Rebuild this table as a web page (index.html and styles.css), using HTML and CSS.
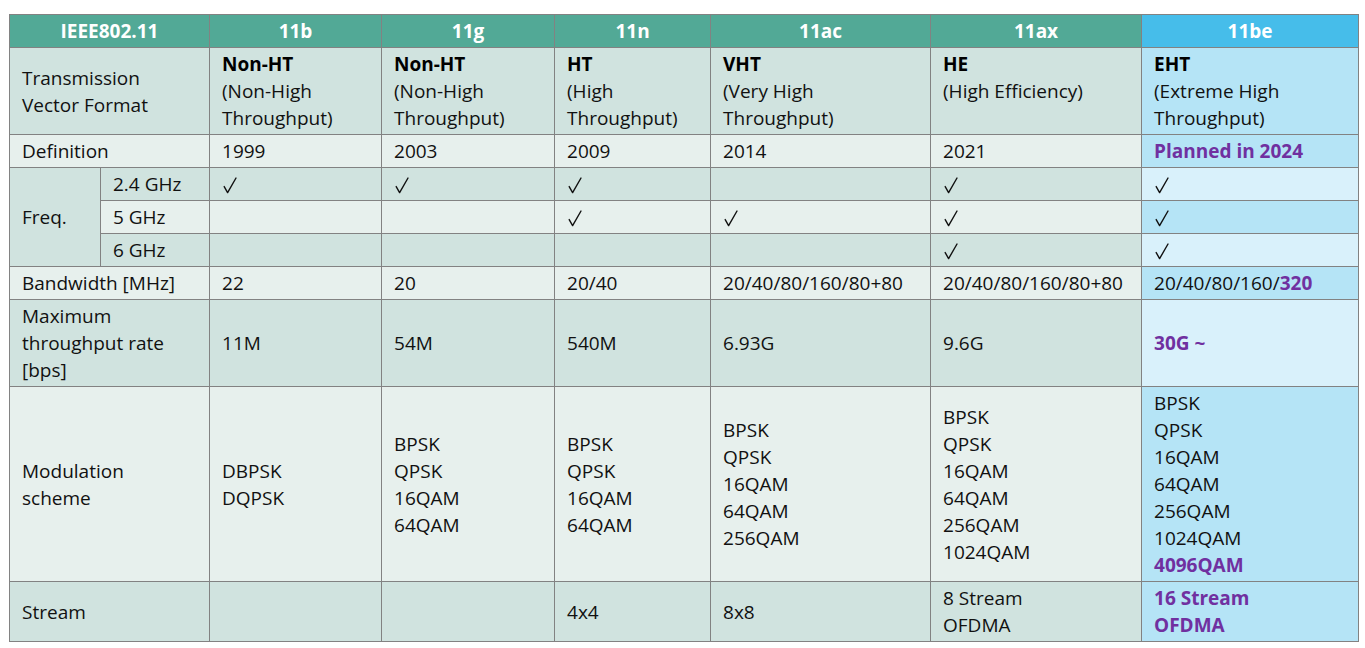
FILE: index.html
```html
<!DOCTYPE html>
<html lang="en">
<head>
<meta charset="utf-8">
<title>IEEE802.11 comparison</title>
<link rel="stylesheet" href="styles.css">
</head>
<body>
<svg class="defs" width="0" height="0" aria-hidden="true">
  <symbol id="ck" viewBox="0 0 14 17">
    <path d="M1.2 9.6 L4.6 15.6 L13 1" fill="none" stroke="#111" stroke-width="1.4" stroke-linecap="round" stroke-linejoin="round"/>
  </symbol>
</svg>
<table class="spec">
  <colgroup>
    <col class="c-a"><col class="c-b"><col class="c-11b"><col class="c-11g"><col class="c-11n"><col class="c-11ac"><col class="c-11ax"><col class="c-11be">
  </colgroup>
  <thead>
    <tr>
      <th colspan="2">IEEE802.11</th>
      <th>11b</th><th>11g</th><th>11n</th><th>11ac</th><th>11ax</th><th class="be">11be</th>
    </tr>
  </thead>
  <tbody>
    <tr class="dark">
      <td colspan="2">Transmission<br>Vector Format</td>
      <td><b>Non-HT</b><br>(Non-High<br>Throughput)</td>
      <td><b>Non-HT</b><br>(Non-High<br>Throughput)</td>
      <td><b>HT</b><br>(High<br>Throughput)</td>
      <td><b>VHT</b><br>(Very High<br>Throughput)</td>
      <td class="top"><b>HE</b><br>(High Efficiency)</td>
      <td class="be-d"><b>EHT</b><br>(Extreme High<br>Throughput)</td>
    </tr>
    <tr class="light">
      <td colspan="2">Definition</td>
      <td>1999</td><td>2003</td><td>2009</td><td>2014</td><td>2021</td>
      <td class="be-d"><b class="hl">Planned in 2024</b></td>
    </tr>
    <tr class="dark">
      <td rowspan="3" class="freq">Freq.</td>
      <td>2.4 GHz</td>
      <td><svg class="ck"><use href="#ck"/></svg></td>
      <td><svg class="ck"><use href="#ck"/></svg></td>
      <td><svg class="ck"><use href="#ck"/></svg></td>
      <td></td>
      <td><svg class="ck"><use href="#ck"/></svg></td>
      <td class="be-l"><svg class="ck"><use href="#ck"/></svg></td>
    </tr>
    <tr class="light">
      <td>5 GHz</td>
      <td></td><td></td>
      <td><svg class="ck"><use href="#ck"/></svg></td>
      <td><svg class="ck"><use href="#ck"/></svg></td>
      <td><svg class="ck"><use href="#ck"/></svg></td>
      <td class="be-d"><svg class="ck"><use href="#ck"/></svg></td>
    </tr>
    <tr class="dark">
      <td>6 GHz</td>
      <td></td><td></td><td></td><td></td>
      <td><svg class="ck"><use href="#ck"/></svg></td>
      <td class="be-l"><svg class="ck"><use href="#ck"/></svg></td>
    </tr>
    <tr class="light">
      <td colspan="2">Bandwidth [MHz]</td>
      <td>22</td><td>20</td><td>20/40</td><td>20/40/80/160/80+80</td><td>20/40/80/160/80+80</td>
      <td class="be-d">20/40/80/160/<b class="hl">320</b></td>
    </tr>
    <tr class="dark">
      <td colspan="2">Maximum<br>throughput rate<br>[bps]</td>
      <td>11M</td><td>54M</td><td>540M</td><td>6.93G</td><td>9.6G</td>
      <td class="be-l"><b class="hl">30G ~</b></td>
    </tr>
    <tr class="light">
      <td colspan="2">Modulation<br>scheme</td>
      <td>DBPSK<br>DQPSK</td>
      <td>BPSK<br>QPSK<br>16QAM<br>64QAM</td>
      <td>BPSK<br>QPSK<br>16QAM<br>64QAM</td>
      <td>BPSK<br>QPSK<br>16QAM<br>64QAM<br>256QAM</td>
      <td>BPSK<br>QPSK<br>16QAM<br>64QAM<br>256QAM<br>1024QAM</td>
      <td class="be-d">BPSK<br>QPSK<br>16QAM<br>64QAM<br>256QAM<br>1024QAM<br><b class="hl">4096QAM</b></td>
    </tr>
    <tr class="dark">
      <td colspan="2">Stream</td>
      <td></td><td></td><td>4x4</td><td>8x8</td><td>8 Stream<br>OFDMA</td>
      <td class="be-d"><b class="hl">16 Stream<br>OFDMA</b></td>
    </tr>
  </tbody>
</table>
</body>
</html>
```

FILE: styles.css
```css
html, body {
  margin: 0;
  background: #ffffff;
}
body {
  padding: 14px 0 0 9px;
  font-family: "Open Sans", "Noto Sans", "DejaVu Sans", sans-serif;
  font-size: 19px;
  color: #111111;
}
.defs {
  position: absolute;
  width: 0;
  height: 0;
  overflow: hidden;
}
.spec {
  border-collapse: collapse;
  table-layout: fixed;
  width: 1350px;
}
.c-a { width: 91px; }
.c-b { width: 109px; }
.c-11b { width: 172px; }
.c-11g { width: 173px; }
.c-11n { width: 156px; }
.c-11ac { width: 220px; }
.c-11ax { width: 211px; }
.c-11be { width: 217px; }
.spec th,
.spec td {
  border: 1px solid #828282;
  line-height: 27px;
  height: 27px;
  padding: 3px 12px 2px 12px;
  text-align: left;
  vertical-align: middle;
  white-space: nowrap;
  overflow: hidden;
}
.spec th {
  background: #52a996;
  color: #ffffff;
  font-weight: 700;
  text-align: center;
}
.spec th.be {
  background: #46bdea;
}
.dark td { background: #d0e3df; }
.light td { background: #e7f0ed; }
.spec td.freq { background: #d0e3df; }
.spec td.be-d { background: #b5e4f6; }
.spec td.be-l { background: #d9f1fb; }
.spec td.top { vertical-align: top; }
.spec b { font-weight: 700; color: #000000; }
.spec b.hl { color: #7030a0; }
.ck {
  display: inline-block;
  width: 14px;
  height: 17px;
  margin-left: 1px;
  vertical-align: -3px;
}
```
